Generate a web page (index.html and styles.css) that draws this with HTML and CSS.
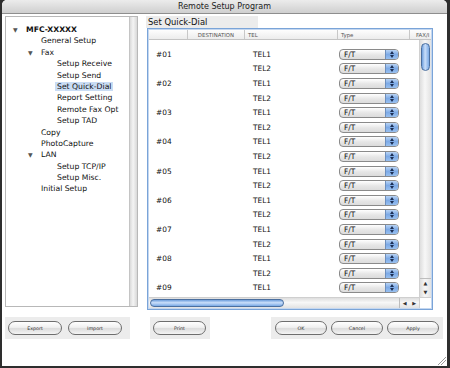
FILE: index.html
```html
<!DOCTYPE html>
<html lang="en">
<head>
  <meta charset="UTF-8">
  <title>Remote Setup Program</title>
  <link rel="stylesheet" href="styles.css">
</head>
<body>
  <div class="window">
    <div class="titlebar">Remote Setup Program</div>

    <div class="content">
      <!-- 左侧树 -->
      <div class="tree-panel">
        <ul class="tree">
          <li class="l0"><span class="disc">&#9660;</span><b>MFC-XXXXX</b></li>
          <li class="l1">General Setup</li>
          <li class="l1"><span class="disc">&#9660;</span>Fax</li>
          <li class="l2">Setup Receive</li>
          <li class="l2">Setup Send</li>
          <li class="l2"><span class="selected">Set Quick-Dial</span></li>
          <li class="l2">Report Setting</li>
          <li class="l2">Remote Fax Opt</li>
          <li class="l2">Setup TAD</li>
          <li class="l1">Copy</li>
          <li class="l1">PhotoCapture</li>
          <li class="l1"><span class="disc">&#9660;</span>LAN</li>
          <li class="l2">Setup TCP/IP</li>
          <li class="l2">Setup Misc.</li>
          <li class="l1">Initial Setup</li>
        </ul>
        <div class="tree-scroll"></div>
      </div>

      <!-- 右侧表格 -->
      <div class="main">
        <div class="section-label">Set Quick-Dial</div>
        <div class="table-box">
          <div class="table-head">
            <div class="c0"></div>
            <div class="c1">DESTINATION</div>
            <div class="c2">TEL</div>
            <div class="c3">Type</div>
            <div class="c4">FAX/I</div>
          </div>
          <div class="table-middle">
            <div class="table-body">
              <div class="row"><div class="c0">#01</div><div class="c1"></div><div class="c2">TEL1</div><div class="c3"><span class="popup">F/T<i></i></span></div></div>
              <div class="row"><div class="c0"></div><div class="c1"></div><div class="c2">TEL2</div><div class="c3"><span class="popup">F/T<i></i></span></div></div>
              <div class="row"><div class="c0">#02</div><div class="c1"></div><div class="c2">TEL1</div><div class="c3"><span class="popup">F/T<i></i></span></div></div>
              <div class="row"><div class="c0"></div><div class="c1"></div><div class="c2">TEL2</div><div class="c3"><span class="popup">F/T<i></i></span></div></div>
              <div class="row"><div class="c0">#03</div><div class="c1"></div><div class="c2">TEL1</div><div class="c3"><span class="popup">F/T<i></i></span></div></div>
              <div class="row"><div class="c0"></div><div class="c1"></div><div class="c2">TEL2</div><div class="c3"><span class="popup">F/T<i></i></span></div></div>
              <div class="row"><div class="c0">#04</div><div class="c1"></div><div class="c2">TEL1</div><div class="c3"><span class="popup">F/T<i></i></span></div></div>
              <div class="row"><div class="c0"></div><div class="c1"></div><div class="c2">TEL2</div><div class="c3"><span class="popup">F/T<i></i></span></div></div>
              <div class="row"><div class="c0">#05</div><div class="c1"></div><div class="c2">TEL1</div><div class="c3"><span class="popup">F/T<i></i></span></div></div>
              <div class="row"><div class="c0"></div><div class="c1"></div><div class="c2">TEL2</div><div class="c3"><span class="popup">F/T<i></i></span></div></div>
              <div class="row"><div class="c0">#06</div><div class="c1"></div><div class="c2">TEL1</div><div class="c3"><span class="popup">F/T<i></i></span></div></div>
              <div class="row"><div class="c0"></div><div class="c1"></div><div class="c2">TEL2</div><div class="c3"><span class="popup">F/T<i></i></span></div></div>
              <div class="row"><div class="c0">#07</div><div class="c1"></div><div class="c2">TEL1</div><div class="c3"><span class="popup">F/T<i></i></span></div></div>
              <div class="row"><div class="c0"></div><div class="c1"></div><div class="c2">TEL2</div><div class="c3"><span class="popup">F/T<i></i></span></div></div>
              <div class="row"><div class="c0">#08</div><div class="c1"></div><div class="c2">TEL1</div><div class="c3"><span class="popup">F/T<i></i></span></div></div>
              <div class="row"><div class="c0"></div><div class="c1"></div><div class="c2">TEL2</div><div class="c3"><span class="popup">F/T<i></i></span></div></div>
              <div class="row"><div class="c0">#09</div><div class="c1"></div><div class="c2">TEL1</div><div class="c3"><span class="popup">F/T<i></i></span></div></div>
              <div class="row"><div class="c0"></div><div class="c1"></div><div class="c2">TEL2</div><div class="c3"><span class="popup">F/T<i></i></span></div></div>
            </div>
            <div class="vscroll">
              <div class="vthumb"></div>
              <div class="varrows"><span>&#9650;</span><span>&#9660;</span></div>
            </div>
          </div>
          <div class="hscroll">
            <div class="hthumb"></div>
            <div class="harrows"><span>&#9664;</span><span>&#9654;</span></div>
            <div class="corner"></div>
          </div>
        </div>
      </div>
    </div>

    <!-- 底部按钮 -->
    <div class="buttons">
      <div class="group g1">
        <button class="btn">Export</button>
        <button class="btn">Import</button>
      </div>
      <div class="group g2">
        <button class="btn">Print</button>
      </div>
      <div class="group g3">
        <button class="btn">OK</button>
        <button class="btn">Cancel</button>
        <button class="btn">Apply</button>
      </div>
    </div>
    <div class="grip"></div>
  </div>
</body>
</html>
```

FILE: styles.css
```css
* {
  box-sizing: border-box;
}
body {
  margin: 0;
  background: #2e2e2e;
  font-family: "DejaVu Sans", "Liberation Sans", sans-serif;
  color: #111;
}
.window {
  margin-left: 2px;
  width: 445px;
  height: 366px;
  background: #fff;
  border-radius: 5px 5px 0 0;
  overflow: hidden;
  display: flex;
  flex-direction: column;
  position: relative;
}
.titlebar {
  height: 14px;
  background: linear-gradient(#ececec, #cfcfcf);
  border-bottom: 1px solid #8e8e8e;
  font-size: 8px;
  line-height: 13px;
  text-align: center;
  color: #222;
}
.content {
  display: flex;
  gap: 8px;
  padding: 2px 0 0 3px;
}

/* tree */
.tree-panel {
  width: 133px;
  height: 291px;
  border: 1px solid #b8b8b8;
  display: flex;
}
.tree {
  flex: 1;
  list-style: none;
  margin: 0;
  padding: 7px 0 0 0;
  font-size: 7.7px;
  line-height: 11.4px;
}
.tree li {
  height: 11.4px;
  white-space: nowrap;
}
.tree .l0 { padding-left: 20px; }
.tree .l1 { padding-left: 35px; }
.tree .l2 { padding-left: 51px; }
.disc {
  display: inline-block;
  width: 13px;
  margin-left: -13px;
  font-size: 6px;
  color: #555;
}
.selected {
  background: #c9dcf4;
  padding: 0 2px;
  margin-left: -2px;
}
.tree-scroll {
  width: 8px;
  background: linear-gradient(90deg, #dadada, #f4f4f4 45%, #d8d8d8);
  border-left: 1px solid #c4c4c4;
}

/* main table */
.main {
  width: 287px;
  display: flex;
  flex-direction: column;
}
.section-label {
  width: 112px;
  height: 12px;
  background: #ececec;
  font-size: 8.4px;
  line-height: 12px;
  padding-left: 2px;
}
.table-box {
  margin-left: 1px;
  width: 286px;
  height: 282px;
  border: 1px solid #7aa4d8;
  box-shadow: inset 0 0 0 1px #c4d7f0;
  padding: 1px;
  display: flex;
  flex-direction: column;
  overflow: hidden;
}
.table-head {
  display: flex;
  height: 10px;
  background: linear-gradient(#fdfdfd, #ececec);
  border-bottom: 1px solid #c4c4c4;
  font-size: 5.4px;
  line-height: 10px;
  color: #555;
  white-space: nowrap;
}
.table-head > div {
  border-right: 1px solid #c8c8c8;
  padding-left: 3px;
  overflow: hidden;
}
.table-head .c1 {
  text-align: center;
  padding-left: 0;
}
.table-head .c4 {
  border-right: 0;
  padding-left: 6px;
}
.c0 { width: 39px; flex: none; }
.c1 { width: 57px; flex: none; }
.c2 { width: 93px; flex: none; }
.c3 { width: 72px; flex: none; }
.c4 { flex: 1; }

.table-middle {
  flex: 1;
  display: flex;
  min-height: 0;
}
.table-body {
  flex: 1;
  padding-top: 7px;
  overflow: hidden;
}
.row {
  display: flex;
  height: 14.6px;
  align-items: center;
  font-size: 7.4px;
}
.row .c0 { padding-left: 7px; }
.row .c2 { padding-left: 8px; }
.row .c3 { padding-left: 1px; }
.popup {
  display: flex;
  align-items: center;
  width: 60px;
  height: 11px;
  border: 1px solid #8a8a8a;
  border-radius: 4px;
  background: linear-gradient(#ffffff, #e6e6e6 55%, #dcdcdc);
  padding-left: 4px;
  font-size: 7.4px;
  overflow: hidden;
}
.popup i {
  position: relative;
  margin-left: auto;
  width: 13px;
  height: 100%;
  background: linear-gradient(#b9d4f5, #7daae6 50%, #98c0f0);
  border-left: 1px solid #6d8fbd;
}
.popup i::before,
.popup i::after {
  content: "";
  position: absolute;
  left: 4px;
  border-left: 2px solid transparent;
  border-right: 2px solid transparent;
}
.popup i::before {
  top: 1px;
  border-bottom: 3px solid #1b2f55;
}
.popup i::after {
  bottom: 1px;
  border-top: 3px solid #1b2f55;
}

/* scrollbars */
.vscroll {
  width: 12px;
  border-left: 1px solid #d0d0d0;
  background: linear-gradient(90deg, #dedede, #f7f7f7 45%, #e2e2e2);
  display: flex;
  flex-direction: column;
  padding-top: 3px;
}
.vthumb {
  margin: 0 1px;
  height: 28px;
  border: 1px solid #4b6f9f;
  border-radius: 5px;
  background: linear-gradient(90deg, #6f9fdc, #c9defa 45%, #7aa9e4);
}
.varrows {
  margin-top: auto;
  display: flex;
  flex-direction: column;
  font-size: 5px;
  color: #333;
  text-align: center;
  border-top: 1px solid #bdbdbd;
}
.varrows span {
  height: 9px;
  line-height: 9px;
}
.hscroll {
  height: 11px;
  display: flex;
  border-top: 1px solid #cfcfcf;
  background: linear-gradient(#dedede, #f7f7f7 45%, #e2e2e2);
}
.hthumb {
  width: 134px;
  margin: 1px 0 1px 1px;
  border: 1px solid #4b6f9f;
  border-radius: 5px;
  background: linear-gradient(#6f9fdc, #c9defa 45%, #7aa9e4);
}
.harrows {
  margin-left: auto;
  width: 20px;
  display: flex;
  font-size: 5px;
  line-height: 10px;
  color: #333;
  border-left: 1px solid #bdbdbd;
}
.harrows span {
  flex: 1;
  text-align: center;
}
.corner {
  width: 12px;
  background: #fff;
  border-left: 1px solid #d0d0d0;
}

/* buttons */
.buttons {
  display: flex;
  margin-top: 7px;
  padding: 0 4px 0 3px;
}
.group {
  height: 22px;
  background: #ececec;
  display: flex;
  align-items: center;
  gap: 6px;
  padding: 0 3px;
}
.g1 { width: 125px; }
.g2 { width: 60px; margin-left: 20px; }
.g3 { width: 172px; margin-left: auto; gap: 4px; padding-left: 4px; }
.btn {
  width: 54px;
  height: 14px;
  border: 1px solid #6e6e6e;
  border-radius: 7px;
  background: linear-gradient(#ffffff, #f0f0f0 45%, #dcdcdc 55%, #f4f4f4);
  font-family: "DejaVu Sans", sans-serif;
  font-size: 4.8px;
  color: #333;
  padding: 0;
}
.g2 .btn { width: 53px; }
.g3 .btn { width: 52px; }
.grip {
  position: absolute;
  right: 1px;
  bottom: 1px;
  width: 8px;
  height: 8px;
  background: linear-gradient(135deg, transparent 45%, #999 45%, #999 52%, transparent 52%, transparent 68%, #999 68%, #999 75%, transparent 75%);
}
```
